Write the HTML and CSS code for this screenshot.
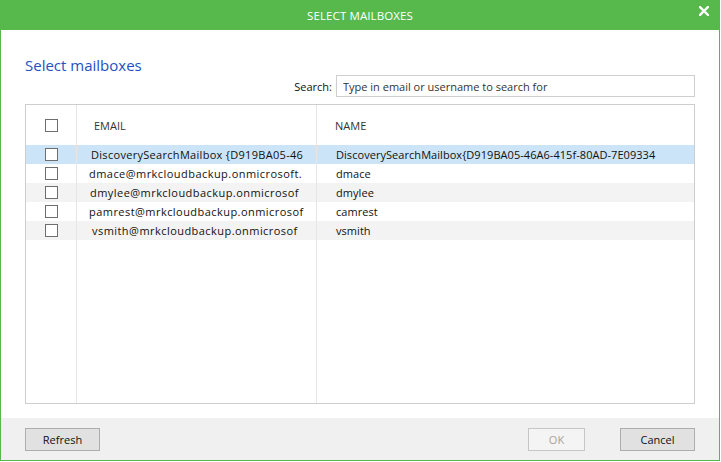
FILE: index.html
```html
<!DOCTYPE html>
<html lang="en">
<head>
<meta charset="utf-8">
<title>Select mailboxes</title>
<link rel="stylesheet" href="styles.css">
</head>
<body>
<div class="window">
  <header class="titlebar">
    <span></span>
    <span class="title">SELECT MAILBOXES</span>
    <span class="close-wrap">
      <svg class="close" width="10" height="10" viewBox="0 0 10 10" aria-label="Close">
        <path d="M1 1 L9 9 M9 1 L1 9" stroke="#fff" stroke-width="2.4" stroke-linecap="square" fill="none"/>
      </svg>
    </span>
  </header>

  <main class="content">
    <h1 class="heading">Select mailboxes</h1>
    <div class="search-row">
      <label class="search-label" for="q">Search:</label>
      <input class="search-input" id="q" type="text" placeholder="Type in email or username to search for">
    </div>

    <div class="table">
      <div class="row head">
        <div class="cell chk"><span class="box"></span></div>
        <div class="cell email">EMAIL</div>
        <div class="cell name">NAME</div>
      </div>
      <div class="row data selected">
        <div class="cell chk"><span class="box"></span></div>
        <div class="cell email i2">DiscoverySearchMailbox {D919BA05-46</div>
        <div class="cell name">DiscoverySearchMailbox{D919BA05-46A6-415f-80AD-7E09334</div>
      </div>
      <div class="row data">
        <div class="cell chk"><span class="box"></span></div>
        <div class="cell email">dmace@mrkcloudbackup.onmicrosoft.</div>
        <div class="cell name">dmace</div>
      </div>
      <div class="row data alt">
        <div class="cell chk"><span class="box"></span></div>
        <div class="cell email i1">dmylee@mrkcloudbackup.onmicrosof</div>
        <div class="cell name">dmylee</div>
      </div>
      <div class="row data">
        <div class="cell chk"><span class="box"></span></div>
        <div class="cell email">pamrest@mrkcloudbackup.onmicrosof</div>
        <div class="cell name">camrest</div>
      </div>
      <div class="row data alt">
        <div class="cell chk"><span class="box"></span></div>
        <div class="cell email i3">vsmith@mrkcloudbackup.onmicrosof</div>
        <div class="cell name">vsmith</div>
      </div>
      <div class="row filler">
        <div class="cell chk"></div>
        <div class="cell email"></div>
        <div class="cell name"></div>
      </div>
    </div>
  </main>

  <footer class="footer">
    <button class="btn refresh">Refresh</button>
    <div class="actions">
      <button class="btn ok" disabled>OK</button>
      <button class="btn cancel">Cancel</button>
    </div>
  </footer>
</div>
</body>
</html>
```

FILE: styles.css
```css
* { box-sizing: border-box; }

html, body {
  margin: 0;
  padding: 0;
  background: #fff;
}

body {
  font-family: "Open Sans", "Noto Sans", sans-serif;
  font-size: 11px;
  color: #111;
}

.window {
  width: 720px;
  height: 461px;
  border: 1px solid #57b94c;
  border-top: none;
  display: flex;
  flex-direction: column;
  background: #fff;
}

.titlebar {
  height: 30px;
  margin: 0 -1px;
  background: #57b94c;
  display: grid;
  grid-template-columns: 1fr auto 1fr;
  align-items: center;
  color: #fff;
}

.title {
  font-size: 11.5px;
  letter-spacing: 0.1px;
}

.close-wrap {
  display: flex;
  justify-content: flex-end;
  align-self: start;
  padding: 6px 11px 0 0;
}

.close { display: block; }

.content {
  flex: 1;
  display: flex;
  flex-direction: column;
  padding: 25px 24px 14px 24px;
}

.heading {
  margin: 0;
  font-size: 15px;
  font-weight: normal;
  line-height: 20px;
  color: #2450bf;
}

.search-row {
  display: flex;
  justify-content: flex-end;
  align-items: center;
  gap: 4px;
}

.search-label {
  font-size: 11px;
  color: #111;
}

.search-input {
  width: 359px;
  height: 22px;
  border: 1px solid #cfcfcf;
  padding: 0 6px;
  font-family: inherit;
  font-size: 11px;
  color: #111;
  outline: none;
}

.search-input::placeholder {
  color: #333;
  opacity: 1;
}

.table {
  margin-top: 7px;
  flex: 1;
  border: 1px solid #cdcdcd;
  display: flex;
  flex-direction: column;
}

.row {
  display: grid;
  grid-template-columns: 51px 240px 1fr;
}

.cell {
  overflow: hidden;
  white-space: nowrap;
  display: flex;
  align-items: center;
}

.cell.chk {
  justify-content: center;
  border-right: 1px solid #e6e6e6;
}

.cell.email {
  border-right: 1px solid #e6e6e6;
}

.head {
  height: 40px;
  color: #333;
}

.head .email { padding-left: 17px; }
.head .name { padding-left: 18px; }

.data {
  height: 19px;
}

.data .email {
  padding-left: 12px;
  letter-spacing: 0.45px;
}
.data .email.i1 { padding-left: 13px; }
.data .email.i2 { padding-left: 14px; letter-spacing: 0.3px; }
.data .email.i3 { padding-left: 15px; }

.data .name {
  padding-left: 19px;
  letter-spacing: 0.05px;
}

.selected { background: #cce4f7; }
.alt { background: #f3f3f3; }

.filler { flex: 1; }

.box {
  display: block;
  width: 13px;
  height: 13px;
  border: 1px solid #6e6e6e;
  background: #fff;
}

.footer {
  height: 42px;
  background: #f0f0f0;
  display: flex;
  justify-content: space-between;
  align-items: flex-start;
  padding: 10px 24px 0 24px;
}

.actions {
  display: flex;
  gap: 35px;
}

.btn {
  height: 23px;
  width: 75px;
  font-family: inherit;
  font-size: 11px;
  color: #111;
  background: #e1e1e1;
  border: 1px solid #adadad;
  padding: 0;
}

.btn.ok {
  width: 57px;
  background: #f4f4f4;
  border-color: #c6c6c6;
  color: #a3a3a3;
}
```
